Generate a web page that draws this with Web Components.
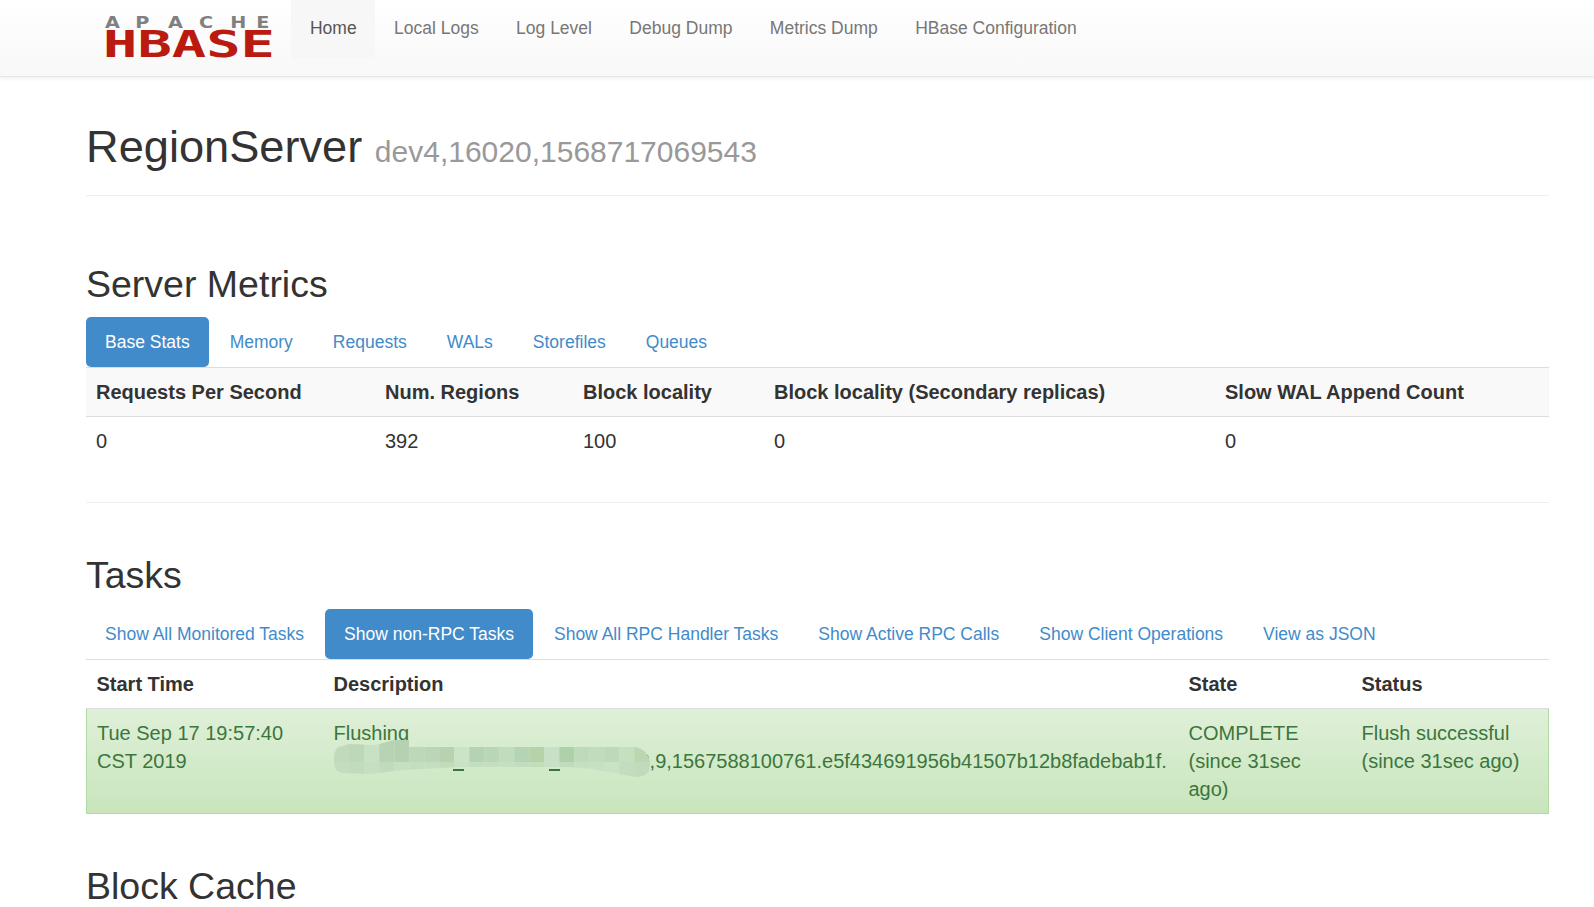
<!DOCTYPE html>
<html>
<head>
<meta charset="utf-8">
<title>RegionServer</title>
<style>
	html, body { margin: 0; padding: 0; background: #fff; }
	body { font: 20px/28px "Liberation Sans", Arial, sans-serif; color: #333; height: 907px; overflow: hidden; }
</style>
</head>
<body>
<hb-navbar active="Home"></hb-navbar>
<hb-page>
	<hb-page-header title="RegionServer" sub="dev4,16020,1568717069543"></hb-page-header>

	<hb-section heading="Server Metrics" class="first">
		<hb-tabs active="Base Stats" items="Base Stats|Memory|Requests|WALs|Storefiles|Queues"></hb-tabs>
		<hb-base-stats></hb-base-stats>
	</hb-section>

	<hb-section heading="Tasks" class="ruled">
		<hb-tabs active="Show non-RPC Tasks" items="Show All Monitored Tasks|Show non-RPC Tasks|Show All RPC Handler Tasks|Show Active RPC Calls|Show Client Operations|View as JSON"></hb-tabs>
		<hb-task-table></hb-task-table>
	</hb-section>

	<hb-section heading="Block Cache" class="last"></hb-section>
</hb-page>

<script>
(function() {
	function tmpl(html) {
		let t = document.createElement('template');
		t.innerHTML = html;
		return t;
	}

	let navTmpl = tmpl(`
		<style>
			:host {
				display: flex;
				height: 77px;
				padding-left: 102px;
				background: linear-gradient(to bottom, #fff 0, #f8f8f8 100%);
				border-bottom: 1px solid #e7e7e7;
				box-shadow: 0 1px 5px rgba(0,0,0,.08);
				box-sizing: border-box;
				font-size: 17.5px;
			}
			svg { display: block; width: 179px; height: 76px; flex: none; }
			ul { display: flex; list-style: none; margin: 0 0 0 10.3px; padding: 0; }
			li { height: 59px; padding: 0 18.7px; line-height: 56px; color: #777; white-space: nowrap; }
			li.active { color: #555; background: #f7f7f7; }
		</style>
		<svg viewBox="0 0 179 76">
			<text transform="translate(3 0) scale(1.2 1)" y="28" x="0 25.3 52.5 78.4 104.3 126" font-family="DejaVu Sans" font-weight="bold" font-size="16" fill="#808080">APACHE</text>
			<text x="1" y="57" textLength="172" lengthAdjust="spacingAndGlyphs" font-family="DejaVu Sans Mono" font-weight="bold" font-size="37" fill="#bb1a10">HBASE</text>
		</svg>
		<ul></ul>
	`);
	class HbNavbar extends HTMLElement {
		constructor() {
			super();
			let shadow = this.attachShadow({ mode: 'open' });
			shadow.appendChild(navTmpl.content.cloneNode(true));
			let ul = shadow.querySelector('ul');
			['Home', 'Local Logs', 'Log Level', 'Debug Dump', 'Metrics Dump', 'HBase Configuration'].forEach(name => {
				let li = document.createElement('li');
				li.textContent = name;
				if (name == this.getAttribute('active')) li.classList.add('active');
				ul.appendChild(li);
			});
		}
	}
	customElements.define('hb-navbar', HbNavbar);

	let pageTmpl = tmpl(`
		<style>
			:host { display: block; padding: 0 45px 0 86px; }
		</style>
		<slot></slot>
	`);
	class HbPage extends HTMLElement {
		constructor() {
			super();
			this.attachShadow({ mode: 'open' }).appendChild(pageTmpl.content.cloneNode(true));
		}
	}
	customElements.define('hb-page', HbPage);

	let headerTmpl = tmpl(`
		<style>
			:host { display: block; padding-top: 45px; border-bottom: 1px solid #eee; height: 73px; }
			h1 { margin: 0; font-weight: 400; font-size: 45.2px; line-height: 50px; color: #333; white-space: nowrap; }
			small { font-size: 30px; color: #999; }
		</style>
		<h1><span id="t"></span> <small id="s"></small></h1>
	`);
	class HbPageHeader extends HTMLElement {
		constructor() {
			super();
			let shadow = this.attachShadow({ mode: 'open' });
			shadow.appendChild(headerTmpl.content.cloneNode(true));
			shadow.querySelector('#t').textContent = this.getAttribute('title');
			shadow.querySelector('#s').textContent = this.getAttribute('sub');
		}
	}
	customElements.define('hb-page-header', HbPageHeader);

	let sectionTmpl = tmpl(`
		<style>
			:host { display: block; }
			:host(.first) { padding-top: 66px; }
			:host(.ruled) { border-top: 1px solid #eee; margin-top: 37px; padding-top: 50px; }
			:host(.last) { padding-top: 50px; }
			h2 { margin: 0 0 11px; font-weight: 400; font-size: 37.5px; line-height: 44px; color: #333; }
			:host(.ruled) h2 { margin-bottom: 12px; }
		</style>
		<h2></h2>
		<slot></slot>
	`);
	class HbSection extends HTMLElement {
		constructor() {
			super();
			let shadow = this.attachShadow({ mode: 'open' });
			shadow.appendChild(sectionTmpl.content.cloneNode(true));
			shadow.querySelector('h2').textContent = this.getAttribute('heading');
		}
	}
	customElements.define('hb-section', HbSection);

	let tabsTmpl = tmpl(`
		<style>
			:host { display: flex; gap: 2px; border-bottom: 1px solid #ddd; height: 50px; box-sizing: content-box; font-size: 17.5px; }
			a { display: block; padding: 0 19px; height: 50px; line-height: 50px; color: #428bca; border-radius: 5px; white-space: nowrap; }
			a.active { color: #fff; background: #428bca; }
		</style>
	`);
	class HbTabs extends HTMLElement {
		constructor() {
			super();
			let shadow = this.attachShadow({ mode: 'open' });
			shadow.appendChild(tabsTmpl.content.cloneNode(true));
			this.getAttribute('items').split('|').forEach(name => {
				let a = document.createElement('a');
				a.textContent = name;
				if (name == this.getAttribute('active')) a.classList.add('active');
				shadow.appendChild(a);
			});
		}
	}
	customElements.define('hb-tabs', HbTabs);

	let tableCss = `
		table { width: 100%; border-collapse: collapse; table-layout: fixed; font-size: 20px; line-height: 28px; }
		th, td { padding: 10px; text-align: left; vertical-align: top; }
		th { font-weight: 700; border-bottom: 1px solid #ddd; }
	`;

	let statsTmpl = tmpl(`
		<style>
			:host { display: block; }
			${tableCss}
			thead tr { background: #f9f9f9; }
		</style>
		<table>
			<colgroup><col style="width:289px"><col style="width:198px"><col style="width:191px"><col style="width:451px"><col></colgroup>
			<thead><tr>
				<th>Requests Per Second</th><th>Num. Regions</th><th>Block locality</th><th>Block locality (Secondary replicas)</th><th>Slow WAL Append Count</th>
			</tr></thead>
			<tbody><tr>
				<td>0</td><td>392</td><td>100</td><td>0</td><td>0</td>
			</tr></tbody>
		</table>
	`);
	class HbBaseStats extends HTMLElement {
		constructor() {
			super();
			this.attachShadow({ mode: 'open' }).appendChild(statsTmpl.content.cloneNode(true));
		}
	}
	customElements.define('hb-base-stats', HbBaseStats);

	// the smudge someone painted over the region name, two rows of 15px blocks
	let topRow = ['#c0dabb','#bdd8b8','#c8e0c3','#b6d3b3','#b4d2b2','#bcd8b9','#bad6b6','#b6d2ae','#cbe3c7','#b5d3b3','#b9d6b5','#c1dcbd','#b5d4b5','#b6d2a9','#c8e1c6','#aed1ab','#bddab9','#c0dcbd','#bdd9ba','#c5dfc1','#bcd7b0','#bcd7b0'];
	let lowRow = ['#c3ddbf','#c1dcbc','#c6dfc1','#c0dbbb','#c5dfc1','#c3ddbf','#c4debf','#c1dbbc','#c8e1c4','#c3ddbf','#c4debf','#c6dfc2','#c2dcbe','#c3ddbb','#c8e1c5','#bfdbbc','#c5dfc1','#c6e0c2','#c9e2c5','#c2dcbe','#bfdbbb','#bfdbbb'];

	let taskTmpl = tmpl(`
		<style>
			:host { display: block; }
			${tableCss}
			tbody tr { background: linear-gradient(to bottom, #dff0d8 0, #c8e5bc 100%); color: #3c763d; }
			tbody td { border-top: 1px solid #ddd; border-bottom: 1px solid #b2dba1; }
			tbody td:first-child { border-left: 1px solid #b2dba1; padding-left: 10px; }
			tbody td:last-child { border-right: 1px solid #b2dba1; }
			.line { white-space: nowrap; }
			.redact { display: inline-block; position: relative; width: 305px; height: 28px; vertical-align: top; }
			.cap { position: absolute; top: 22px; width: 11px; height: 2px; background: #3c763d; }
			svg { position: absolute; left: 0; top: -8px; width: 318px; height: 40px; }
		</style>
		<table>
			<colgroup><col style="width:237px"><col style="width:855px"><col style="width:173px"><col></colgroup>
			<thead><tr>
				<th>Start Time</th><th>Description</th><th>State</th><th>Status</th>
			</tr></thead>
			<tbody><tr>
				<td>Tue Sep 17 19:57:40 CST 2019</td>
				<td>Flushing<br><span class="line"><span class="redact"><span class="cap" style="left:119px"></span><span class="cap" style="left:215px"></span><svg viewBox="0 0 318 40"><defs><clipPath id="blob"><path d="M0 17Q1 10 5 8L15 5L42 6L60 1L75 1L75 8L302 8Q312 10 316 22Q316 33 314 33Q310 38 302 38L285 35L259 30L232 28L125 28L69 31L35 35L9 34Q0 32 0 25Z"/></clipPath></defs><g id="cells" clip-path="url(#blob)"></g></svg></span>3,9,1567588100761.e5f434691956b41507b12b8fadebab1f.</span></td>
				<td>COMPLETE (since 31sec ago)</td>
				<td>Flush successful (since 31sec ago)</td>
			</tr></tbody>
		</table>
	`);
	class HbTaskTable extends HTMLElement {
		constructor() {
			super();
			let shadow = this.attachShadow({ mode: 'open' });
			shadow.appendChild(taskTmpl.content.cloneNode(true));
			let cells = shadow.querySelector('#cells');
			let ns = 'http://www.w3.org/2000/svg';
			[[topRow, 0, 23], [lowRow, 23, 17]].forEach(([row, y, h]) => {
				row.forEach((c, i) => {
					let r = document.createElementNS(ns, 'rect');
					r.setAttribute('x', i == 0 ? 0 : i * 15 + 0.3);
					r.setAttribute('y', y);
					r.setAttribute('width', i == 0 ? 16 : 15);
					r.setAttribute('height', h);
					r.setAttribute('fill', c);
					cells.appendChild(r);
				});
			});
		}
	}
	customElements.define('hb-task-table', HbTaskTable);
})();
</script>
</body>
</html>
